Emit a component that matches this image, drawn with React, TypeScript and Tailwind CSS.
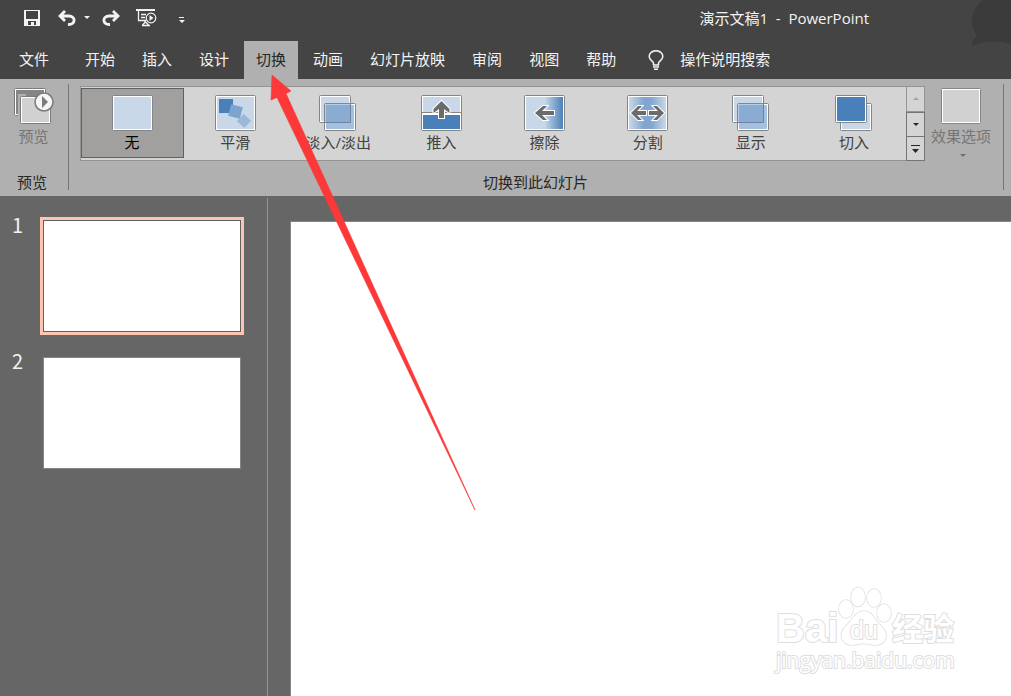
import type { ReactNode } from "react"
import clsx from "clsx"

const tabs = ["开始", "插入", "设计", "切换", "动画", "幻灯片放映", "审阅", "视图", "帮助"]

function Tile({ children }: { children?: ReactNode }) {
  return (
    <svg width="41" height="36" viewBox="0 0 41 36" aria-hidden="true">
      <rect x="0.5" y="0.5" width="40" height="35" rx="1" fill="#fff" stroke="#858585" />
      <rect x="2" y="2" width="37" height="32" rx="1" fill="#c8d8e9" />
      {children}
    </svg>
  )
}

function MorphIcon() {
  return (
    <Tile>
      <rect x="4" y="4" width="14" height="14" fill="#4a80b9" />
      <rect x="14.5" y="10.5" width="12" height="12" fill="#7da3cf" transform="rotate(15 20.5 16.5)" />
      <rect x="24" y="21" width="10" height="10" fill="#9ab8da" transform="rotate(42 29 26)" />
    </Tile>
  )
}

function OverlapIcon() {
  return (
    <svg width="38" height="36" viewBox="0 0 38 36" aria-hidden="true">
      <rect x="0.5" y="0.5" width="31" height="27" rx="1" fill="#fff" stroke="#858585" />
      <rect x="2" y="2" width="28" height="24" rx="1" fill="#c8d8e9" />
      <rect x="5.5" y="8.5" width="31" height="27" rx="1" fill="#fff" stroke="#858585" />
      <rect x="7" y="10" width="28" height="24" rx="1" fill="#a5bfde" />
      <path d="M6 9h25v18H6z" fill="#b9cce4" />
      <path d="M7 10h24v17H7z" fill="#8aabd2" />
      <path d="M31.5 9v18.5H6" fill="none" stroke="#6e83a0" />
    </svg>
  )
}

function PushIcon() {
  return (
    <Tile>
      <path d="M2 20h37v14H2z" fill="#4a80b9" />
      <path d="M1 18.5h39" stroke="#fff" strokeWidth="3" />
      <path d="M0 17.5h41" stroke="#858585" />
      <path d="M20.5 6l8 8v4L23 14v9h-5v-9l-5.500 4v-4z" fill="#6b6b6b" stroke="#fff" strokeWidth="2" paintOrder="stroke" />
    </Tile>
  )
}

function WipeIcon() {
  return (
    <Tile>
      <defs>
        <linearGradient id="wipe">
          <stop offset="0.5" stopColor="#c8d8e9" />
          <stop offset="1" stopColor="#4a80b9" />
        </linearGradient>
      </defs>
      <path d="M2 2h37v32H2z" fill="url(#wipe)" />
      <path d="M11 18l8-7h4l-5 5h12v4H18l5 5h-4z" fill="#6b6b6b" stroke="#fff" strokeWidth="2" paintOrder="stroke" />
    </Tile>
  )
}

function SplitIcon() {
  return (
    <Tile>
      <defs>
        <linearGradient id="split">
          <stop offset="0" stopColor="#c8d8e9" />
          <stop offset="0.4" stopColor="#82a6cf" />
          <stop offset="0.6" stopColor="#82a6cf" />
          <stop offset="1" stopColor="#c8d8e9" />
        </linearGradient>
      </defs>
      <path d="M2 2h37v32H2z" fill="url(#split)" />
      <g fill="#6b6b6b" stroke="#fff" strokeWidth="2" paintOrder="stroke">
        <path d="M4 18l7-7h4l-5 5h9v4h-9l5 5h-4z" />
        <path d="M37 18l-7-7h-4l5 5h-9v4h9l-5 5h4z" />
      </g>
    </Tile>
  )
}

function CutIcon() {
  return (
    <svg width="38" height="36" viewBox="0 0 38 36" aria-hidden="true">
      <rect x="5.5" y="8.5" width="31" height="27" rx="1" fill="#fff" stroke="#858585" />
      <rect x="7" y="10" width="28" height="24" rx="1" fill="#c8d8e9" />
      <rect x="0.5" y="0.5" width="31" height="27" rx="1" fill="#fff" stroke="#858585" />
      <rect x="2" y="2" width="28" height="24" rx="1" fill="#4a80b9" />
    </svg>
  )
}

const transitions = [
  { name: "无", icon: <Tile /> },
  { name: "平滑", icon: <MorphIcon /> },
  { name: "淡入/淡出", icon: <OverlapIcon /> },
  { name: "推入", icon: <PushIcon /> },
  { name: "擦除", icon: <WipeIcon /> },
  { name: "分割", icon: <SplitIcon /> },
  { name: "显示", icon: <OverlapIcon /> },
  { name: "切入", icon: <CutIcon /> },
]

function TitleBar() {
  return (
    <header className="relative flex h-[41px] items-start pl-6 pt-2">
      <svg className="absolute right-0 top-0" width="40" height="47" viewBox="0 0 40 47" aria-hidden="true">
        <path d="M12 0C4 6 1 14 1 21c0 6 2 11 5 15-4 3-5 6-5 10 9-5 26-6 39-2V0z" fill="#3b3b3b" />
      </svg>
      <div className="flex h-5 items-center">
        <button aria-label="保存" className="mr-[18px]">
          <svg width="16" height="16" viewBox="0 0 16 16">
            <path d="M0 0h16v16H0z" fill="#f3f3f3" />
            <path d="M2 1h12v8H2zM4 11h8v4h-2v-3H7v3H4z" fill="#444" />
            <path d="M10 12h2v3h-2z" fill="#444" />
          </svg>
        </button>
        <button aria-label="撤消" className="mr-[7px]">
          <svg width="19" height="16" viewBox="0 0 19 16">
            <path d="M7 1L2 6l5 5M3 6h8c7 0 7 9-1 8.500" fill="none" stroke="#f3f3f3" strokeWidth="2.8" />
          </svg>
        </button>
        <button aria-label="撤消列表" className="mr-[11px]">
          <svg width="6" height="4" viewBox="0 0 6 4">
            <path d="M0 0h6L3 3z" fill="#f3f3f3" />
          </svg>
        </button>
        <button aria-label="恢复" className="mr-4">
          <svg width="19" height="16" viewBox="0 0 19 16">
            <path d="M12 1l5 5-5 5M16 6H8c-7 0-7 9 1 8.500" fill="none" stroke="#f3f3f3" strokeWidth="2.8" />
          </svg>
        </button>
        <button aria-label="从头开始" className="mr-[22px]">
          <svg width="21" height="18" viewBox="0 0 21 18" fill="none" stroke="#f3f3f3">
            <path d="M0 1h19" strokeWidth="2" />
            <path d="M2.5 2v9.5H10M5 5.5h5M5 8.500h4M9 12v2M6 16.5h8M6.5 16l3-3 3 3" strokeWidth="1.3" />
            <circle cx="15" cy="9" r="4.800" fill="#444" strokeWidth="1.2" />
            <path d="M13.5 6v6l4-3z" fill="#f3f3f3" stroke="none" />
          </svg>
        </button>
        <button aria-label="自定义快速访问工具栏" className="pt-1">
          <svg width="6" height="7" viewBox="0 0 6 7" fill="#f3f3f3">
            <path d="M0 0h5v1H0zM0 3h6L3 6z" />
          </svg>
        </button>
      </div>
      <h1 className="ml-auto mr-[142px] whitespace-pre text-[15px] leading-5">演示文稿1  -  PowerPoint</h1>
    </header>
  )
}

function TabBar() {
  return (
    <nav className="flex h-[38px] items-stretch whitespace-nowrap pl-[7px] text-[15px]">
      <button className="mr-3 px-3 pb-[2px]">文件</button>
      <div className="flex gap-[3px]">
        {tabs.map((tab) => (
          <button key={tab} className={clsx("px-3 pb-[2px]", tab === "切换" && "bg-[#b0b0b0] text-[#262626]")}>
            {tab}
          </button>
        ))}
      </div>
      <button className="ml-5 flex items-center gap-4 pb-[2px]">
        <svg className="mt-[2px]" width="16" height="20" viewBox="0 0 16 20" fill="none" stroke="#f3f3f3" strokeWidth="1.5">
          <path d="M5.5 15v-2C5 11 1.200 10 1.200 6.500a6.800 5.800 0 0 1 13.600 0C14.800 10 11 11 10.500 13v2zM5 17h6M6 19.200h4" />
        </svg>
        操作说明搜索
      </button>
    </nav>
  )
}

function Ribbon() {
  return (
    <section className="flex h-[117px] bg-[#b0b0b0] pb-[6px] pt-[5px] text-[15px] leading-5 text-[#262626]">
      <div className="flex w-[69px] shrink-0 flex-col items-center justify-between border-r border-[#757575] pt-1">
        <button disabled className="flex flex-col items-center gap-[2px] pr-px text-[#757575]">
          <svg width="40" height="36" viewBox="0 0 40 36" aria-hidden="true">
            <rect x="0.5" y="0.5" width="31" height="27" rx="1" fill="#fff" stroke="#7a7a7a" />
            <path d="M2 2h28v24H2z" fill="#858585" />
            <path d="M4 6h8v22H4z" fill="#b0b0b0" />
            <rect x="6.5" y="8.5" width="30" height="27" rx="1" fill="#fff" stroke="#7a7a7a" />
            <rect x="8" y="10" width="27" height="24" rx="1" fill="#d1d1d1" />
            <circle cx="30" cy="14" r="9" fill="#f5f5f5" stroke="#7a7a7a" strokeWidth="1.5" />
            <path d="M28 8v12l6-6z" fill="#7a7a7a" />
          </svg>
          预览
        </button>
        <span className="pr-1 leading-4">预览</span>
      </div>
      <div className="flex min-w-0 flex-1 flex-col justify-between pl-[11px] pt-[2px]">
        <div className="flex">
          <div className="flex h-[75px] min-w-0 flex-1 border border-r-0 border-[#949494] bg-[#d4d4d4] pb-[2px] pt-px">
            {transitions.map((t) => (
              <button
                key={t.name}
                className={clsx(
                  "flex min-w-0 flex-1 flex-col items-center gap-px border pr-px pt-[6px]",
                  t.name === "无" ? "border-[#606060] bg-[#a1a09e] text-black" : "border-transparent text-[#404040]",
                )}
              >
                {t.icon}
                {t.name}
              </button>
            ))}
          </div>
          <div className="flex w-[19px] flex-col">
            <button disabled aria-label="上一行" className="flex h-[26px] items-center justify-center border border-[#949494] bg-[#d4d4d4]">
              <svg width="6" height="4" viewBox="0 0 6 4"><path d="M0 3h6L3 0z" fill="#a5a5a5" /></svg>
            </button>
            <button aria-label="下一行" className="flex flex-1 items-center justify-center border border-[#757575] bg-[#d4d4d4]">
              <svg width="6" height="4" viewBox="0 0 6 4"><path d="M0 0h6L3 3z" fill="#262626" /></svg>
            </button>
            <button aria-label="其他" className="flex flex-1 items-center justify-center border border-t-0 border-[#757575] bg-[#d4d4d4]">
              <svg width="9" height="8" viewBox="0 0 9 8"><path d="M0 0h9v1H0zM1 4h7L4.500 8z" fill="#262626" /></svg>
            </button>
          </div>
          <button disabled className="ml-[6px] mr-3 mt-[2px] flex w-[60px] flex-col items-center gap-[2px] whitespace-nowrap text-[#757575]">
            <svg width="40" height="36" viewBox="0 0 40 36" aria-hidden="true">
              <rect x="0.5" y="0.5" width="39" height="35" rx="1" fill="#fff" stroke="#858585" />
              <rect x="2" y="2" width="36" height="32" rx="1" fill="#d1d1d1" />
            </svg>
            效果选项
            <svg className="ml-1 mt-[6px]" width="6" height="4" viewBox="0 0 6 4"><path d="M0 0h6L3 3z" fill="#707070" /></svg>
          </button>
        </div>
        <span className="pr-3 text-center leading-4">切换到此幻灯片</span>
      </div>
      <div className="mr-[7px] w-px shrink-0 bg-[#757575]" />
    </section>
  )
}

function SlidePanel() {
  return (
    <aside className="mt-[2px] w-[268px] shrink-0 border-r border-[#949494] pt-[19px] font-['Noto_Sans_CJK_SC'] text-xl leading-4">
      <ol>
        <li className="flex">
          <span className="w-10 pl-3">1</span>
          <button aria-label="幻灯片 1" className="h-[118px] w-[204px] border-[3px] border-[#fcc5b2] bg-[#606060] p-px">
            <span className="block h-full bg-white" />
          </button>
        </li>
        <li className="mt-[22px] flex">
          <span className="-mt-1 w-[43px] pl-3">2</span>
          <button aria-label="幻灯片 2" className="h-[112px] w-[198px] border border-[#858585] bg-white" />
        </li>
      </ol>
    </aside>
  )
}

function Watermark() {
  return (
    <div className="absolute bottom-[22px] right-[53px] w-[182px] text-white [-webkit-text-stroke:2px_#dedede] [paint-order:stroke]">
      <div className="flex h-[60px] items-end">
        <span className="w-[62px] font-['Liberation_Sans'] text-[40px] font-bold leading-9">Bai</span>
        <div className="relative h-[60px] w-[54px]">
          <svg width="54" height="60" viewBox="0 0 54 60" fill="#fff" stroke="#dedede" strokeWidth="1.5" aria-hidden="true">
            <ellipse cx="8" cy="23" rx="7" ry="9" />
            <ellipse cx="20" cy="11" rx="7" ry="9.500" />
            <ellipse cx="36" cy="12" rx="7" ry="9" />
            <ellipse cx="46" cy="27" rx="7" ry="9" />
            <path d="M26 25c9 0 11 10 18 16 8 8 3 19-8 18-7-2-14-2-20 0-12 1-16-10-9-18 6-5 10-16 19-16z" />
          </svg>
          <span className="absolute bottom-1 left-3 font-['Liberation_Sans'] text-[25px] leading-6">du</span>
        </div>
        <span className="text-[31px] font-bold leading-9">经验</span>
      </div>
      <div className="font-['Open_Sans'] text-[21px] leading-7">jingyan.baidu.com</div>
    </div>
  )
}

export default function App() {
  return (
    <div className="relative flex h-screen flex-col overflow-hidden bg-[#444] font-['Open_Sans','Noto_Sans_CJK_SC',sans-serif] text-[#f3f3f3]">
      <TitleBar />
      <TabBar />
      <Ribbon />
      <div className="flex min-h-0 flex-1 bg-[#666]">
        <SlidePanel />
        <main className="relative ml-[22px] mt-[25px] flex-1 border-l border-t border-[#858585] bg-white">
          <Watermark />
        </main>
      </div>
      <svg className="pointer-events-none absolute left-[270px] top-[74px]" width="206" height="438" viewBox="270 74 206 438" aria-hidden="true">
        <path d="M272 75L291 91l-5 2.500L475 510 277 97.500l-6 2.500z" fill="#fc3838" stroke="#fc3838" strokeWidth="0.6" />
      </svg>
    </div>
  )
}
